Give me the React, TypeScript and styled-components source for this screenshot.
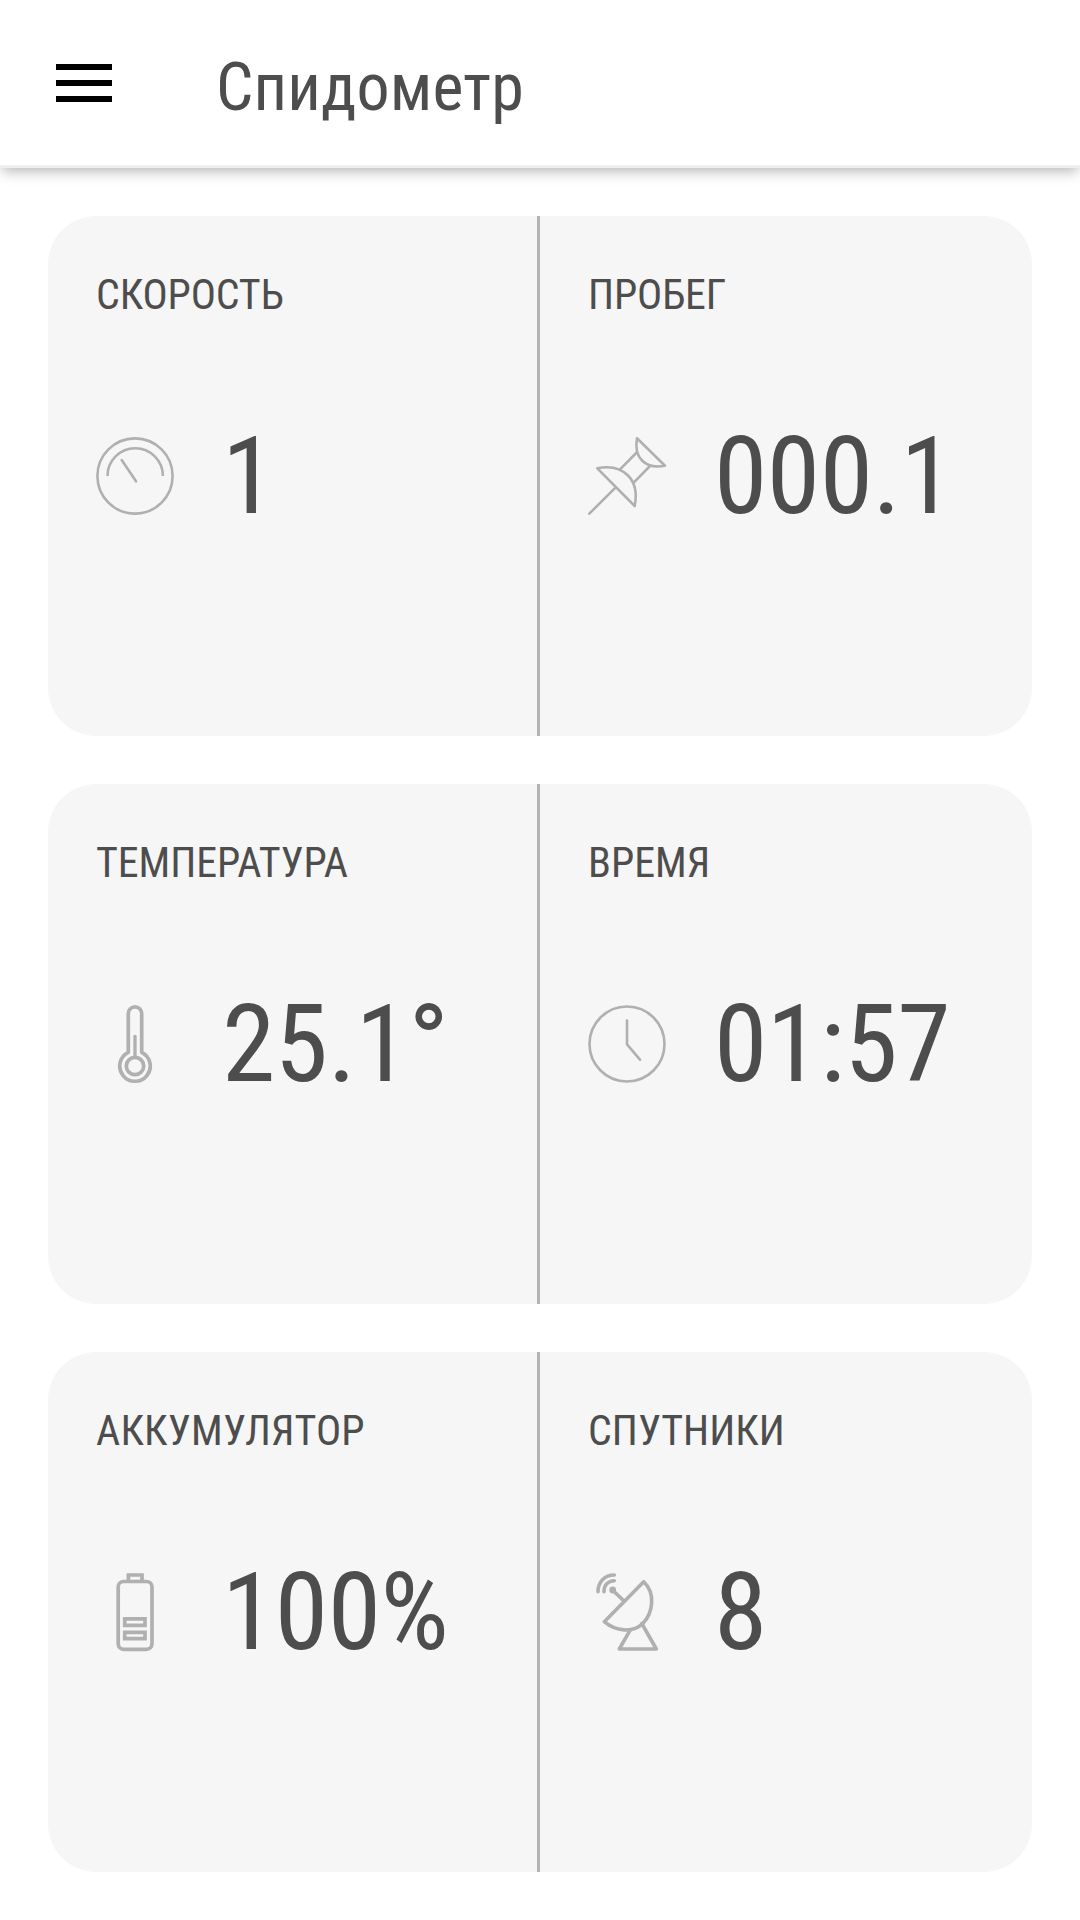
import React from "react";
import styled, { createGlobalStyle } from "styled-components";

const GlobalStyle = createGlobalStyle`
  body {
    margin: 0;
    background: #fff;
    color: #4d4d4d;
    font-family: "Roboto Condensed", Roboto, "Noto Sans", sans-serif;
    font-stretch: 75%;
  }
`;

const Screen = styled.div`
  width: 1080px;
  height: 1920px;
  overflow: hidden;
  background: #fff;
`;

const Header = styled.header`
  box-sizing: border-box;
  display: flex;
  align-items: center;
  height: 168px;
  padding: 0 56px;
  border-bottom: 3px solid #eee;
  box-shadow: 0 5px 13px -2px rgba(0, 0, 0, 0.3);
`;

const MenuButton = styled.button`
  display: flex;
  flex-direction: column;
  gap: 10px;
  width: 56px;
  padding: 0;
  border: 0;
  background: none;
`;

const MenuBar = styled.span`
  height: 6px;
  background: #000;
`;

const Title = styled.h1`
  margin: 10px 0 0 104px;
  font-size: 66px;
  line-height: 80px;
  font-weight: 400;
  letter-spacing: 0.1px;
`;

const Dashboard = styled.main`
  display: flex;
  flex-direction: column;
  gap: 48px;
  padding: 48px;
`;

const Card = styled.section`
  display: grid;
  grid-template-columns: 492px 492px;
  height: 520px;
  border-radius: 48px;
  background: #f6f6f6;
  overflow: hidden;
`;

const Cell = styled.div<{ $divided?: boolean }>`
  box-sizing: border-box;
  display: grid;
  grid-template-rows: 160px 200px 160px;
  padding-left: 47px;
  border-right: ${(p) => (p.$divided ? "3px solid #b4b4b4" : "0")};
`;

const Label = styled.h2<{ $tracking: number }>`
  margin: 54px 0 0 1px;
  font-size: 42px;
  line-height: 50px;
  font-weight: 400;
  letter-spacing: ${(p) => p.$tracking}px;
`;

const Reading = styled.div`
  display: flex;
  align-items: center;
`;

const Icon = styled.svg<{ $weight: number }>`
  flex: none;
  width: 80px;
  height: 80px;
  fill: none;
  stroke: #b0b0b0;
  stroke-width: ${(p) => p.$weight};
  stroke-linecap: round;
  stroke-linejoin: round;
`;

const Value = styled.span`
  margin-left: 47px;
  font-size: 108px;
  line-height: 128px;
  letter-spacing: -0.45px;
  white-space: nowrap;
`;

type Metric = {
  label: string;
  tracking?: number;
  value: string;
  weight: number;
  icon: React.ReactNode;
};

const rows: [Metric, Metric][] = [
  [
    {
      label: "СКОРОСТЬ",
      tracking: -0.15,
      value: "1",
      weight: 2.6,
      icon: (
        <>
          <circle cx="40" cy="40" r="37.6" />
          <path d="M12.5 40a27.7 27.7 0 0 1 55.4 0" strokeLinecap="butt" />
          <path d="M26.7 24 41 45.3" />
        </>
      ),
    },
    {
      label: "ПРОБЕГ",
      tracking: -0.15,
      value: "000.1",
      weight: 2.6,
      icon: (
        <>
          <path d="M50 2.3 78 29.7C69 31.5 61 30.5 55 24.5S48.5 11 50 2.3Z" />
          <path d="M49.7 16.5 33 33.3M63 30 46.7 46.7M28.7 51.3 2.3 77.7" />
          <path d="M10.3 32.3 47.7 70C50 58 49 47.5 41 39.5S22 29.8 10.3 32.3Z" />
        </>
      ),
    },
  ],
  [
    {
      label: "ТЕМПЕРАТУРА",
      tracking: -0.1,
      value: "25.1°",
      weight: 3.7,
      icon: (
        <>
          <path d="M33.3 48.3V9.5a6.7 6.7 0 0 1 13.4 0V48.3A15.25 15.25 0 1 1 33.3 48.3Z" />
          <circle cx="40" cy="62" r="8.7" />
          <path d="M40 32.3V53" strokeWidth="3.3" />
        </>
      ),
    },
    {
      label: "ВРЕМЯ",
      value: "01:57",
      weight: 2.6,
      icon: (
        <>
          <circle cx="40" cy="40" r="37.5" />
          <path d="M40 16.5V40.3L53 55.7" />
        </>
      ),
    },
  ],
  [
    {
      label: "АККУМУЛЯТОР",
      tracking: 0.18,
      value: "100%",
      weight: 3.7,
      icon: (
        <>
          <rect x="23.2" y="9.5" width="33.8" height="67.8" rx="5.5" />
          <path d="M33.4 9V3h13.6V9" strokeLinejoin="miter" />
          <path d="M29.7 46.8H50V53.3H29.7ZM29.7 60.3H50V66.7H29.7Z" strokeLinejoin="miter" />
        </>
      ),
    },
    {
      label: "СПУТНИКИ",
      value: "8",
      weight: 3.6,
      icon: (
        <>
          <path d="M56.7 9.7 17.3 49.7C28.5 59.5 46 61.2 56 51.2S68.8 21 56.7 9.7Z" />
          <path d="M36.7 28.7 25.7 18.3" />
          <circle cx="25.7" cy="18" r="1.6" />
          <path d="M27.3 8.7C21 9 17 13 17 19.7M27.3 3C17.5 3 11 10 11 19.7" />
          <path d="M43.3 57.8 32.3 77H69.3L54.8 51.5" />
        </>
      ),
    },
  ],
];

const MetricCell = ({ metric, divided }: { metric: Metric; divided?: boolean }) => (
  <Cell $divided={divided}>
    <Label $tracking={metric.tracking ?? 0}>{metric.label}</Label>
    <Reading>
      <Icon viewBox="0 0 80 80" $weight={metric.weight}>
        {metric.icon}
      </Icon>
      <Value>{metric.value}</Value>
    </Reading>
  </Cell>
);

export default function App() {
  return (
    <Screen>
      <GlobalStyle />
      <Header>
        <MenuButton aria-label="Меню">
          <MenuBar />
          <MenuBar />
          <MenuBar />
        </MenuButton>
        <Title>Спидометр</Title>
      </Header>
      <Dashboard>
        {rows.map(([left, right]) => (
          <Card key={left.label}>
            <MetricCell metric={left} divided />
            <MetricCell metric={right} />
          </Card>
        ))}
      </Dashboard>
    </Screen>
  );
}
